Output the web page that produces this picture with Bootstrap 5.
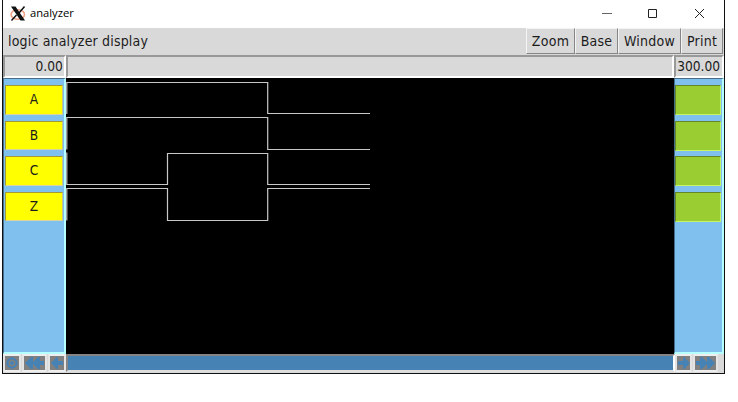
<!DOCTYPE html>
<html lang="en">
<head>
<meta charset="utf-8">
<title>analyzer</title>
<link href="https://cdn.jsdelivr.net/npm/bootstrap@5.3.0/dist/css/bootstrap.min.css" rel="stylesheet">
<style>
body{background:#fff;color:#1c1c1c;font:13.6px/16px "DejaVu Sans Condensed","DejaVu Sans",sans-serif;font-stretch:condensed;overflow:hidden}
.win{width:723px;height:374px;margin-left:2px;border:1px solid #111;border-top:0}
.titlebar{height:28px;padding-left:7px;font:11.2px/16px "Open Sans",sans-serif;color:#000}
.titlebar .caption{margin-left:4px;padding-bottom:2px}
.controls{width:137px}
.menubar{height:27px;background:#d9d9d9;padding:0 1px 0 5px}
.menubar .menu-label{font-size:14px;letter-spacing:.17px;padding-top:5px}
.menubar .menu-btn{height:26px;border:1px solid;border-color:#f4f4f4 #858585 #858585 #f4f4f4;border-radius:0;padding:0;font-size:14px;letter-spacing:.25px;line-height:25px;color:#1c1c1c;background:#d9d9d9}
.ruler{height:23px;background:#d9d9d9}
.sunk{border:2px solid;border-color:#999 #fff #fff #999;height:23px;line-height:19px;white-space:nowrap}
.side-l{width:63px}.side-r{width:50px}
.sunk.side-l{padding-right:1px;letter-spacing:.1px}
.sunk.side-r{padding-right:2px}
.stage{height:276px}
.pane{background:#7fc0ef;border:1px solid;border-color:#446c8b #b5ffff #b5ffff #446c8b;border-right-width:2px;border-bottom-width:2px}
.lanes{padding-top:6px}
.signal{height:29.5px;margin:0 1px 6px;background:#ff0;border:1px solid;border-color:#a39a35 #c8c48a #d8d5a0 #a39a35;line-height:27px}
.green{height:30px;margin:0 1px 5.5px 0;background:#9acd32;border:1px solid;border-color:#658529 #c5f465 #c5f465 #658529}
.wave{background:#000}
.bottombar{height:19px;background:#d9d9d9}
.nav-key{height:18px;background:#808080;border:2px solid;border-color:#eee #e4e4e4 #eee #e4e4e4}
.track{background:#4682b4;border:2px solid;border-color:#858585 #fff #ddd #858585;height:18px}
svg{display:block}
</style>
<script src="https://cdn.jsdelivr.net/npm/bootstrap@5.3.0/dist/js/bootstrap.bundle.min.js"></script>
</head>
<body>
<div class="win d-flex flex-column">
  <header class="titlebar d-flex align-items-center">
    <svg width="16" height="16" viewBox="0 0 16 16"><ellipse cx="7.800" cy="8.500" rx="6.700" ry="4.800" fill="none" stroke="#f3a184" stroke-width="1.600"/><path d="M1 .5h4.500L15 14.500h-4.500z" fill="#111"/><path d="M14.500 .5L9 7M6.500 9L1.500 14.500" stroke="#111" stroke-width="1.500"/></svg>
    <span class="caption">analyzer</span>
    <div class="controls d-flex ms-auto">
      <svg width="137" height="28" viewBox="0 0 137 28" fill="none" stroke="#222"><path d="M15 13.500h10" stroke="#666"/><path d="M61.500 9.500h8v8h-8z"/><path d="M108 9l9 9M117 9l-9 9"/></svg>
    </div>
  </header>
  <nav class="menubar d-flex align-items-start">
    <span class="menu-label flex-fill">logic analyzer display</span>
    <button class="btn menu-btn" style="width:49px">Zoom</button>
    <button class="btn menu-btn" style="width:43px">Base</button>
    <button class="btn menu-btn" style="width:63px">Window</button>
    <button class="btn menu-btn" style="width:42px">Print</button>
  </nav>
  <div class="ruler d-flex">
    <div class="sunk side-l text-end">0.00</div>
    <div class="sunk flex-fill"></div>
    <div class="sunk side-r text-end">300.00</div>
  </div>
  <main class="stage d-flex">
    <aside class="pane lanes side-l text-center">
      <div class="signal">A</div><div class="signal">B</div><div class="signal">C</div><div class="signal">Z</div>
    </aside>
    <section class="wave flex-fill">
      <svg width="608" height="276" viewBox="0 0 608 276" fill="none" stroke="#c8c8c8" stroke-width="1.200">
        <path d="M.8 36V4.500H201.700V35.500H304"/>
        <path d="M.8 71.500V39.500H201.700V71.500H304"/>
        <path d="M.8 74.500V106.500H101.500V75.500H201.700V106.500H304"/>
        <path d="M.8 142.500V110.500H101.500V142.500H201.700V110.500H304"/>
      </svg>
    </section>
    <aside class="pane lanes side-r">
      <div class="green"></div><div class="green"></div><div class="green"></div><div class="green"></div>
    </aside>
  </main>
  <footer class="bottombar d-flex">
    <div class="nav-key" style="width:18px;margin-right:1px"><svg width="14" height="14" viewBox="0 0 14 14"><path d="M7 1l4 2 2 4-2 4-4 2-4-2-2-4 2-4z" fill="#4682b4"/><circle cx="7" cy="7" r="3.500" fill="#808080"/><circle cx="7" cy="7" r="2" fill="#4682b4"/></svg></div>
    <div class="nav-key" style="width:25px;margin-right:1px"><svg width="21" height="14" viewBox="0 0 21 14" fill="#4682b4"><path d="M1 7l6-6h2v5l5-5h2v4h4v4h-4v4h-2L9 8v5H7z"/></svg></div>
    <div class="nav-key" style="width:18px"><svg width="14" height="14" viewBox="0 0 14 14" fill="#4682b4"><path d="M1 7l6-6h1v4h5v4H8v4H7z"/></svg></div>
    <div class="track flex-fill"></div>
    <div class="nav-key" style="width:17px"><svg width="13" height="14" viewBox="0 0 13 14" fill="#4682b4"><path d="M13 7L7 1H6v4H1v4h5v4h1z"/></svg></div>
    <div class="nav-key" style="width:25px;margin-left:1px"><svg width="21" height="14" viewBox="0 0 21 14" fill="#4682b4"><path d="M20 7l-6-6h-2v5L7 1H5v4H1v4h4v4h2l5-5v5h2z"/></svg></div>
    <div style="width:6px"></div>
  </footer>
</div>
</body>
</html>
